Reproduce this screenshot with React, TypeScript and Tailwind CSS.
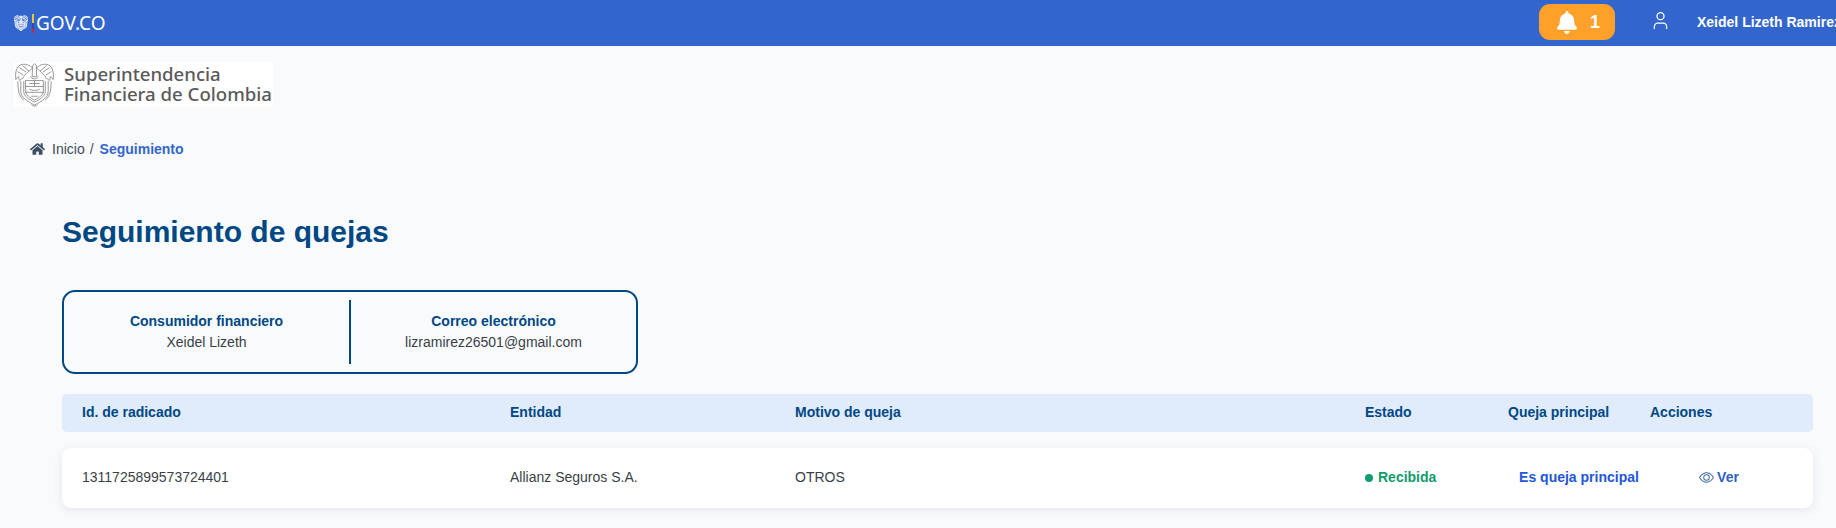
import { FaBell, FaHome } from "react-icons/fa";
import { BsEye } from "react-icons/bs";
import { LuUser } from "react-icons/lu";

function Coat({ className, color, sw = 1 }: { className: string; color: string; sw?: number }) {
  return (
    <svg viewBox="0 0 40 46" className={className} fill="none" stroke={color} strokeWidth={sw} strokeLinecap="round" strokeLinejoin="round">
      <path d="M18 6C14 2 8 1 4 4 1 7 0 12 1 18c1-2 2-3 3-3 0 2 0 3 1 4 1-2 2-2 3-2 1-4 5-6 10-11Z" />
      <path d="M22 6c4-4 10-5 14-2 3 3 4 8 3 14-1-2-2-3-3-3 0 2 0 3-1 4-1-2-2-2-3-2-1-4-5-6-10-11Z" />
      <path d="M5 6l6 4M8 4l6 5M3 10l5 3M35 6l-6 4M32 4l-6 5M37 10l-5 3" />
      <path d="M18 5c0-2 1-3 2-3s2 1 2 3v10h-4Z" />
      <path d="M16 15c1 3 7 3 8 0" />
      <path d="M6 20v10c0 6 6 10 14 14 8-4 14-8 14-14V20" />
      <path d="M9 20v10c0 5 5 8 11 11 6-3 11-6 11-11V20" />
      <path d="M11 19h18v11c0 4-4 6-9 9-5-3-9-5-9-9Z" />
      <path d="M11 25h18M11 31h18M20 19v6M15 22h10" />
      <path d="M15 28c2 1.500 8 1.500 10 0M17 35h6" />
      <path d="M3 20c0 9 1 15 6 19M37 20c0 9-1 15-6 19" />
      <path d="M17 44c1 1.500 5 1.500 6 0" />
    </svg>
  );
}

const grid = "grid grid-cols-[428px_285px_570px_143px_142px_143px] pl-5 pb-[1px] items-center";

export default function App() {
  return (
    <div className="w-[1836px] h-[528px] overflow-hidden bg-[#f9fafc] font-['Liberation_Sans',Arial,sans-serif] text-[#3a3f47]">
      <header className="h-[46px] bg-[#3366cc] flex items-center text-white">
        <div className="flex items-center pl-[14px] w-[1539px] shrink-0">
          <Coat className="w-[14px] h-[16px]" color="#ffffff" sw={2.4} />
          <div className="ml-[4px] w-[2px] h-[19px] flex flex-col">
            <div className="h-[9px] bg-[#f4c430]" />
            <div className="h-[5px] bg-[#2f4aa8]" />
            <div className="h-[5px] bg-[#c2274b]" />
          </div>
          <span className="ml-[2px] text-[19px] leading-none font-['Noto_Sans',sans-serif]">GOV.CO</span>
        </div>
        <div className="w-[76px] h-[36px] shrink-0 rounded-[11px] bg-[#ffa02b] flex items-center pl-[18px] mt-[-2px]">
          <FaBell className="w-[20px] h-[23px]" />
          <span className="ml-[13px] text-[18px] font-bold leading-none">1</span>
        </div>
        <div className="w-[221px] shrink-0 overflow-hidden flex items-center mt-[-2px]">
          <LuUser className="ml-[35px] w-[21px] h-[21px] shrink-0 mt-[-4px]" strokeWidth={1.5} />
          <span className="ml-[26px] text-[14px] font-bold whitespace-nowrap">Xeidel Lizeth Ramirez</span>
        </div>
      </header>

      <div className="mt-[16px] ml-[14px] w-[259px] h-[45px] bg-white flex items-center overflow-hidden">
        <Coat className="w-[41px] h-[45px] shrink-0" color="#8a8a8a" sw={0.9} />
        <div className="ml-[9px] mt-[-2px] font-['Noto_Sans',sans-serif] font-medium text-[#5a5a5a] text-[18.6px] leading-[20px] whitespace-nowrap">
          <div>Superintendencia</div>
          <div>Financiera de Colombia</div>
        </div>
      </div>

      <nav className="mt-[34px] ml-[30px] h-[16px] flex items-center text-[14px] leading-none">
        <FaHome className="w-[15px] h-[14px] text-[#3d4f66]" />
        <span className="ml-[7px] text-[#3f4a5a]">Inicio</span>
        <span className="ml-[5px] text-[#3f4a5a]">/</span>
        <span className="ml-[6px] font-bold text-[14px] text-[#3366cc]">Seguimiento</span>
      </nav>

      <div className="ml-[62px] w-[1751px]">
        <h1 className="mt-[57px] text-[30px] leading-[36px] font-bold text-[#004884]">Seguimiento de quejas</h1>

        <div className="mt-[40px] w-[576px] h-[84px] box-border border-2 border-[#004884] rounded-[13px] flex items-center text-center">
          <div className="w-[285px] text-[14px] leading-[21px]">
            <div className="font-bold text-[#004884]">Consumidor financiero</div>
            <div>Xeidel Lizeth</div>
          </div>
          <div className="w-[2px] h-[64px] bg-[#004884]" />
          <div className="flex-1 text-[14px] leading-[21px]">
            <div className="font-bold text-[#004884]">Correo electrónico</div>
            <div>lizramirez26501@gmail.com</div>
          </div>
        </div>

        <div className={`${grid} mt-[20px] h-[38px] rounded-[5px] bg-[#e0ebfc] text-[14px] font-bold text-[#004884]`}>
          <div>Id. de radicado</div>
          <div>Entidad</div>
          <div>Motivo de queja</div>
          <div>Estado</div>
          <div>Queja principal</div>
          <div>Acciones</div>
        </div>

        <div className={`${grid} mt-[16px] h-[60px] rounded-[9px] bg-white text-[14px] shadow-[0_2px_10px_rgba(40,60,90,0.10)]`}>
          <div>1311725899573724401</div>
          <div>Allianz Seguros S.A.</div>
          <div>OTROS</div>
          <div className="flex items-center font-bold text-[#0f9d6b]">
            <span className="w-[8px] h-[8px] rounded-full bg-[#0f9d6b] mr-[5px]" />
            Recibida
          </div>
          <div className="text-center font-bold text-[#2356d8] whitespace-nowrap">Es queja principal</div>
          <div className="flex items-center justify-center font-bold text-[#2f5fc4] pr-[5px]">
            <BsEye className="w-[15px] h-[15px] mr-[3px] text-[#3f6aa8]" />
            Ver
          </div>
        </div>
      </div>
    </div>
  );
}
